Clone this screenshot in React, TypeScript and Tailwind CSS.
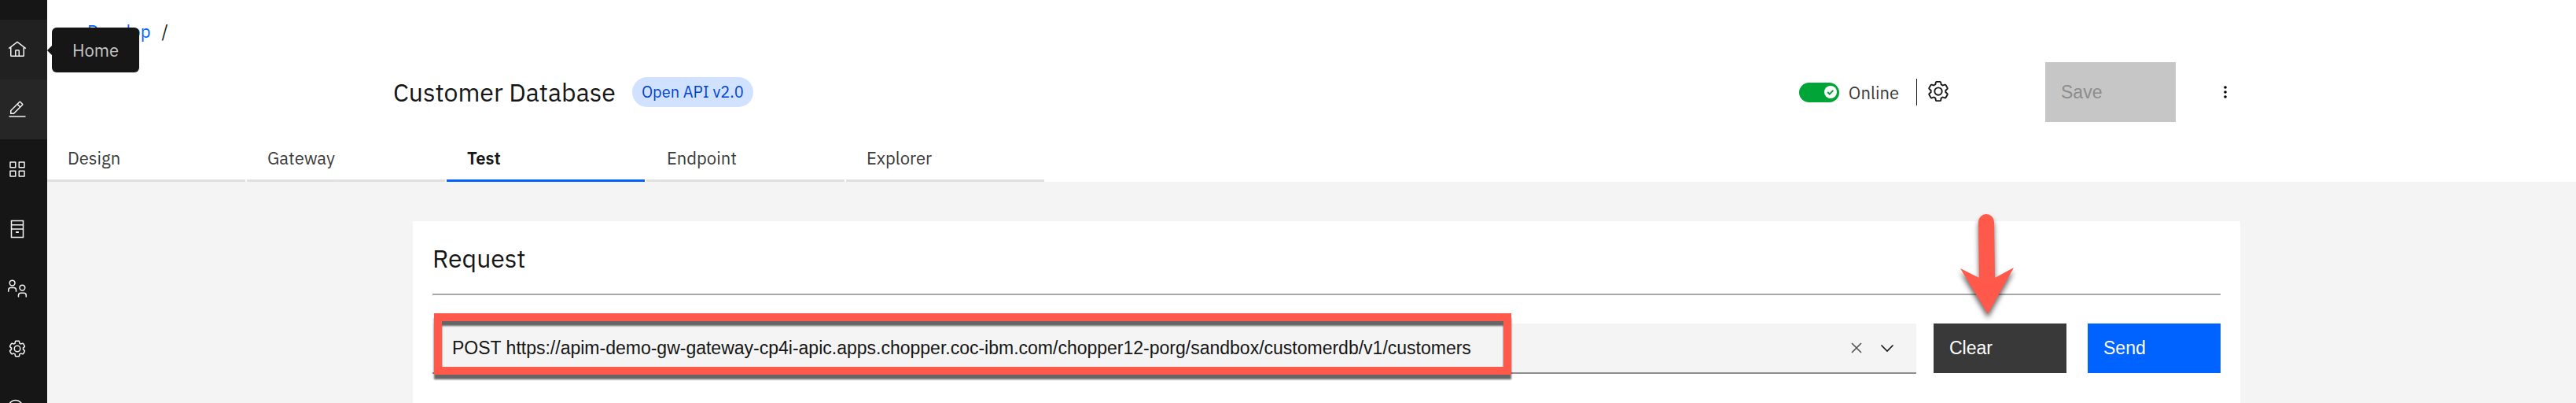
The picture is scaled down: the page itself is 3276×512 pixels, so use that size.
import { ReactNode } from "react";

function Icon({ size = "size-6", children }: { size?: string; children: ReactNode }) {
  return (
    <svg viewBox="0 0 32 32" className={size} fill="currentColor" aria-hidden="true">
      {children}
    </svg>
  );
}

const gear = (
  <path d="M27,16.76c0-.25,0-.5,0-.76s0-.51,0-.77l1.92-1.68A2,2,0,0,0,29.3,11L26.94,7a2,2,0,0,0-1.73-1,2,2,0,0,0-.64.1l-2.43.82a11.35,11.35,0,0,0-1.31-.75l-.51-2.52a2,2,0,0,0-2-1.61H13.64a2,2,0,0,0-2,1.61l-.51,2.52a11.48,11.48,0,0,0-1.32.75L7.43,6.06A2,2,0,0,0,6.79,6,2,2,0,0,0,5.06,7L2.7,11a2,2,0,0,0,.41,2.51L5,15.24c0,.25,0,.5,0,.76s0,.51,0,.77L3.11,18.45A2,2,0,0,0,2.7,21L5.06,25a2,2,0,0,0,1.73,1,2,2,0,0,0,.64-.1l2.43-.82a11.35,11.35,0,0,0,1.31.75l.51,2.52a2,2,0,0,0,2,1.61h4.72a2,2,0,0,0,2-1.61l.51-2.52a11.48,11.48,0,0,0,1.32-.75l2.42.82a2,2,0,0,0,.64.1,2,2,0,0,0,1.73-1L29.3,21a2,2,0,0,0-.41-2.51ZM25.21,24l-3.43-1.16a8.86,8.86,0,0,1-2.71,1.57L18.36,28H13.64l-.71-3.55a9.36,9.36,0,0,1-2.7-1.57L6.79,24,4.43,20l2.72-2.4a8.9,8.9,0,0,1,0-3.13L4.43,12,6.79,8l3.43,1.16a8.86,8.86,0,0,1,2.71-1.57L13.64,4h4.72l.71,3.55a9.36,9.36,0,0,1,2.7,1.57L25.21,8,27.57,12l-2.72,2.4a8.9,8.9,0,0,1,0,3.13L27.57,20ZM16,22a6,6,0,1,1,6-6A5.94,5.94,0,0,1,16,22Zm0-10a3.91,3.91,0,0,0-4,4,3.91,3.91,0,0,0,4,4,3.91,3.91,0,0,0,4-4A3.91,3.91,0,0,0,16,12Z" />
);

const navItems = [
  {
    label: "Home",
    tone: "bg-[#212121]",
    icon: (
      <path d="M16.61,2.21a1,1,0,0,0-1.24,0L1,13.42,2.24,15,4,13.62V26a2,2,0,0,0,2,2H26a2,2,0,0,0,2-2V13.63L29.76,15,31,13.43ZM18,26H14V18h4Zm2,0V18a2,2,0,0,0-2-2H14a2,2,0,0,0-2,2v8H6V12.06L16,4.27l10,7.8V26Z" />
    ),
  },
  {
    label: "Develop",
    tone: "bg-[#262626]",
    icon: (
      <path d="M2,27H30v2H2ZM25.41,9a2,2,0,0,0,0-2.83L21.83,2.59a2,2,0,0,0-2.83,0L4,17.59V24h6.41ZM20.41,4,24,7.59l-3,3L17.41,7ZM6,22V18.41l10-10L19.59,12l-10,10Z" />
    ),
  },
  {
    label: "Manage",
    tone: "bg-[#161616]",
    icon: (
      <path
        d="M4 4h9v9H4ZM19 4h9v9h-9ZM4 19h9v9H4ZM19 19h9v9h-9Z"
        fill="none"
        stroke="currentColor"
        strokeWidth="2"
        strokeLinejoin="round"
      />
    ),
  },
  {
    label: "Resources",
    tone: "bg-[#161616]",
    icon: (
      <path
        fillRule="evenodd"
        d="M5 1h22v30H5ZM7 3v5h18V3ZM7 10v5h18v-5ZM7 17v12h18V17ZM13.5 20h5v2.5h-5Z"
      />
    ),
  },
  {
    label: "Members",
    tone: "bg-[#161616]",
    icon: (
      <g fill="none" stroke="currentColor" strokeWidth="2">
        <circle cx="7.5" cy="6" r="4.5" />
        <path d="M1 21v-3a4 4 0 0 1 4-4h5a4 4 0 0 1 4 4v3" />
        <circle cx="24.5" cy="14" r="4.5" />
        <path d="M18 30v-3a4 4 0 0 1 4-4h5a4 4 0 0 1 4 4v3" />
      </g>
    ),
  },
  { label: "Settings", tone: "bg-[#161616]", icon: gear },
  {
    label: "Help",
    tone: "bg-[#161616]",
    icon: <circle cx="13" cy="14" r="12" fill="none" stroke="currentColor" strokeWidth="2" />,
  },
];

const tabs = ["Design", "Gateway", "Test", "Endpoint", "Explorer"];

function SideNav() {
  return (
    <nav aria-label="Main" className="relative z-10 w-15 shrink-0 bg-[#161616]">
      <div className="h-full overflow-hidden pt-[25px]">
        {navItems.map((item) => (
          <a
            key={item.label}
            href="#"
            aria-label={item.label}
            className={`flex h-19 items-center pl-[10px] text-[#f4f4f4] ${item.tone}`}
          >
            <Icon>{item.icon}</Icon>
          </a>
        ))}
      </div>
      <div
        role="tooltip"
        className="absolute top-[35px] left-[66px] flex h-[57px] w-[111px] items-center justify-center rounded-md bg-[#161616] text-[22px] text-[#c6c6c6]"
      >
        <span className="absolute top-1/2 -left-[6px] -translate-y-1/2 border-y-[6px] border-r-[6px] border-y-transparent border-r-[#161616]" />
        Home
      </div>
    </nav>
  );
}

function Header() {
  return (
    <header className="bg-white">
      <nav aria-label="Breadcrumb" className="flex gap-[14px] pt-6 pl-[51px] text-[22px] leading-8">
        <a href="#" className="text-[#0062ff]">
          Develop
        </a>
        <span>/</span>
      </nav>
      <div className="flex h-[118px] items-center pt-1 pr-[436px] pl-[440px]">
        <h1 className="text-[32px]">Customer Database</h1>
        <span className="ml-[21px] flex h-[38px] items-center rounded-full bg-[#d0e2ff] px-3 text-[20px] text-[#0043ce]">
          Open API v2.0
        </span>
        <label className="ml-auto flex items-center gap-3 text-[22px] text-[#393939]">
          <span className="relative flex h-[25px] w-[51px] items-center justify-end rounded-full bg-[#00a437] pr-[3px]">
            <input type="checkbox" defaultChecked className="absolute inset-0 appearance-none" />
            <svg viewBox="0 0 19 19" className="size-4" aria-hidden="true">
              <circle cx="9.5" cy="9.5" r="9.5" fill="#fff" />
              <path d="M5 9.5l3 3 5.5-5.5" fill="none" stroke="#00a437" strokeWidth="2.4" />
            </svg>
          </span>
          Online
        </label>
        <span className="ml-[22px] h-[34px] w-px bg-[#161616]" />
        <button aria-label="Settings" className="ml-3 pb-[2px]">
          <Icon size="size-[30px]">{gear}</Icon>
        </button>
        <button
          disabled
          className="ml-[121px] h-19 w-[166px] bg-[#c6c6c6] pl-5 text-left font-['Liberation_Sans',sans-serif] text-[23px] text-[#8d8d8d]"
        >
          Save
        </button>
        <button aria-label="More actions" className="ml-[53px]">
          <svg viewBox="0 0 20 20" className="size-5" aria-hidden="true">
            <circle cx="10" cy="4" r="1.8" />
            <circle cx="10" cy="10" r="1.8" />
            <circle cx="10" cy="16" r="1.8" />
          </svg>
        </button>
      </div>
      <div role="tablist" className="flex gap-[2px]">
        {tabs.map((tab) => (
          <button
            key={tab}
            role="tab"
            aria-selected={tab === "Test"}
            className={`h-[57px] w-[252px] border-b-[3px] pb-[2px] pl-[26px] text-left text-[22px] ${
              tab === "Test"
                ? "border-[#0062ff] font-semibold text-[#161616]"
                : "border-[#e0e0e0] text-[#393939]"
            }`}
          >
            {tab}
          </button>
        ))}
      </div>
    </header>
  );
}

function RequestPanel() {
  return (
    <section className="relative mt-[50px] mr-[427px] ml-[465px] flex-1 bg-white px-[25px] pt-[27px] font-['Liberation_Sans',sans-serif] text-[23px]">
      <h2 className="border-b-2 border-[#a8a8a8] pb-[25px] font-['IBM_Plex_Sans',Roboto,sans-serif] text-[32px] leading-10">
        Request
      </h2>
      <div className="flex pt-9">
        <div className="relative flex h-16 flex-1 items-center gap-[22px] border-b-2 border-[#8d8d8d] bg-[#f4f4f4] pr-[28px] pl-[25px]">
          <input
            aria-label="Request URL"
            readOnly
            className="min-w-0 flex-1 bg-transparent"
            defaultValue="POST https://apim-demo-gw-gateway-cp4i-apic.apps.chopper.coc-ibm.com/chopper12-porg/sandbox/customerdb/v1/customers"
          />
          <button aria-label="Clear URL">
            <svg viewBox="0 0 16 16" className="size-4" fill="none" stroke="#525252" strokeWidth="1.6" aria-hidden="true">
              <path d="M2 2l12 12M14 2L2 14" />
            </svg>
          </button>
          <button aria-label="Open list">
            <svg viewBox="0 0 18 18" className="size-[18px]" fill="none" stroke="#161616" strokeWidth="1.6" aria-hidden="true">
              <path d="M1.5 5.5L9 13l7.5-7.5" />
            </svg>
          </button>
          <div className="pointer-events-none absolute -top-[13px] left-[2px] h-[78px] w-[1370px] border-10 border-[#ff594c] drop-shadow-[0_6px_1px_rgba(0,0,0,0.6)]" />
        </div>
        <button className="ml-[22px] h-[63px] w-[169px] bg-[#393939] pl-5 text-left text-white">Clear</button>
        <button className="ml-[27px] h-[63px] w-[169px] bg-[#0062ff] pl-5 text-left text-white">Send</button>
      </div>
      <svg
        viewBox="0 0 80 140"
        className="pointer-events-none absolute -top-[9px] right-[280px] h-[140px] w-20 overflow-visible drop-shadow-[0_5px_3px_rgba(0,0,0,0.6)]"
        fill="#ff594c"
        aria-hidden="true"
      >
        <path d="M27 10a10 10 0 0 1 20 0L48 81 72 68 39 127 4 69 28 81Z" />
      </svg>
    </section>
  );
}

export default function App() {
  return (
    <div className="flex h-screen overflow-hidden bg-[#f4f4f4] font-['IBM_Plex_Sans',Roboto,sans-serif] text-[#161616]">
      <SideNav />
      <main className="flex min-w-0 flex-1 flex-col">
        <Header />
        <RequestPanel />
      </main>
    </div>
  );
}
